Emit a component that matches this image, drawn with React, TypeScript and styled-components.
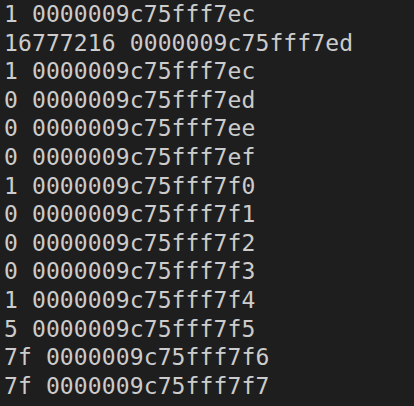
import React from "react";
import styled, { createGlobalStyle } from "styled-components";

const Global = createGlobalStyle`
  html, body { margin: 0; padding: 0; background: #1e1e1e; }
`;

const Terminal = styled.div`
  width: 414px;
  height: 406px;
  box-sizing: border-box;
  background: #1e1e1e;
  color: #cccccc;
  font-family: "DejaVu Sans Mono", "Liberation Mono", monospace;
  font-size: 23px;
  letter-spacing: 0.12px;
  line-height: 28.6px;
  padding: 0 0 0 4px;
  overflow: hidden;
`;

const Line = styled.div`
  white-space: pre;
`;

const lines = [
  "1 0000009c75fff7ec",
  "16777216 0000009c75fff7ed",
  "1 0000009c75fff7ec",
  "0 0000009c75fff7ed",
  "0 0000009c75fff7ee",
  "0 0000009c75fff7ef",
  "1 0000009c75fff7f0",
  "0 0000009c75fff7f1",
  "0 0000009c75fff7f2",
  "0 0000009c75fff7f3",
  "1 0000009c75fff7f4",
  "5 0000009c75fff7f5",
  "7f 0000009c75fff7f6",
  "7f 0000009c75fff7f7",
];

export default function App() {
  return (
    <>
      <Global />
      <Terminal>
        {lines.map((l, i) => (
          <Line key={i}>{l}</Line>
        ))}
      </Terminal>
    </>
  );
}
